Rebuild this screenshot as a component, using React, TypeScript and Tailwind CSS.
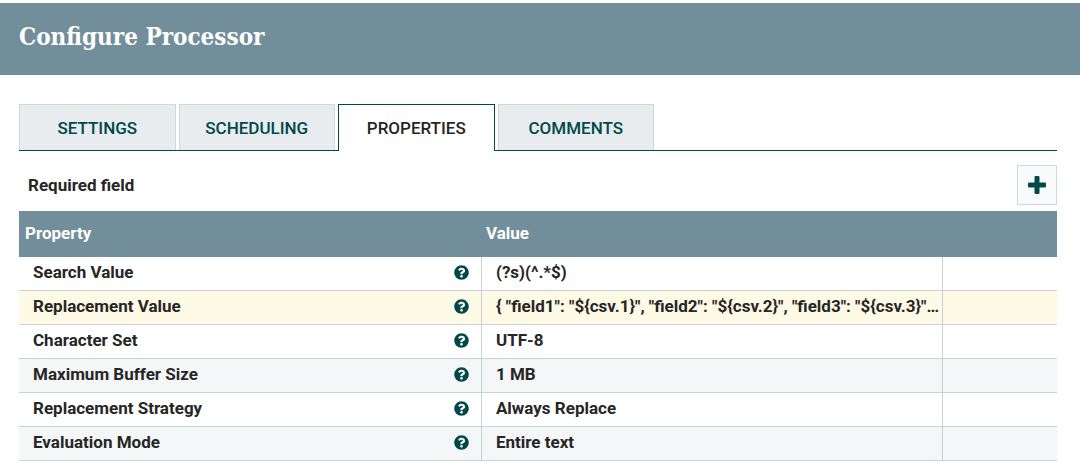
import { useState } from "react";
import { FaQuestionCircle } from "react-icons/fa";

const TABS = ["Settings", "Scheduling", "Properties", "Comments"];

const PROPERTIES = [
  { name: "Search Value", value: "(?s)(^.*$)" },
  {
    name: "Replacement Value",
    value: '{ "field1": "${csv.1}", "field2": "${csv.2}", "field3": "${csv.3}", "field4": "${csv.4}" }',
  },
  { name: "Character Set", value: "UTF-8" },
  { name: "Maximum Buffer Size", value: "1 MB" },
  { name: "Replacement Strategy", value: "Always Replace" },
  { name: "Evaluation Mode", value: "Entire text" },
];

function rowColor(index: number, selected: number) {
  if (index === selected) return "bg-[#fffae6]";
  return index % 2 === 0 ? "bg-white" : "bg-[#f4f6f7]";
}

function PlusIcon() {
  return (
    <svg viewBox="0 0 18 18" className="size-[18px]" fill="currentColor" aria-hidden="true">
      <path d="M7.8 0h2.4a1.3 1.3 0 0 1 1.3 1.3v5.2h5.2A1.3 1.3 0 0 1 18 7.8v2.4a1.3 1.3 0 0 1-1.3 1.3h-5.2v5.2a1.3 1.3 0 0 1-1.3 1.3H7.8a1.3 1.3 0 0 1-1.3-1.3v-5.2H1.3A1.3 1.3 0 0 1 0 10.2V7.8a1.3 1.3 0 0 1 1.3-1.3h5.2V1.3A1.3 1.3 0 0 1 7.8 0z" />
    </svg>
  );
}

export default function App() {
  const [activeTab, setActiveTab] = useState("Properties");
  const [selectedRow, setSelectedRow] = useState(1);

  return (
    <div className="bg-white pt-[3px] pb-2 font-['Roboto',sans-serif] text-[17px] leading-6 text-[#262626]">
      <header className="bg-[#728e9b] px-[19px] pt-[18px] pb-[22px]">
        <h1 className="font-['Roboto_Slab','DejaVu_Serif_Condensed','DejaVu_Serif',serif] text-[24px] leading-8 font-bold text-white">
          Configure Processor
        </h1>
      </header>

      <main className="pt-[29px] pr-[23px] pl-[19px]">
        <div role="tablist" className="border-b border-[#004849]">
          <div className="flex w-[635px] gap-[3px]">
            {TABS.map((tab) => (
              <button
                key={tab}
                type="button"
                role="tab"
                aria-selected={tab === activeTab}
                onClick={() => setActiveTab(tab)}
                className={
                  tab === activeTab
                    ? "-mb-px h-[47px] flex-1 border border-b-0 border-[#004849] bg-white font-medium uppercase"
                    : "h-[46px] flex-1 border border-b-0 border-[#ccdadb] bg-[#e8ecef] font-medium text-[#004849] uppercase"
                }
              >
                {tab}
              </button>
            ))}
          </div>
        </div>

        <div className="flex items-center justify-between pt-[14px] pb-[6px] pl-[9px]">
          <span className="font-bold">Required field</span>
          <button
            type="button"
            aria-label="Add property"
            className="flex size-10 items-center justify-center border border-[#ccdadb] bg-[#f9fafb] text-[#004849]"
          >
            <PlusIcon />
          </button>
        </div>

        <table className="w-full table-fixed border-separate border-spacing-0 text-left font-bold">
          <thead>
            <tr className="h-[46px] bg-[#728e9b] text-white">
              <th scope="col" className="w-[44.6%] px-1.5 pb-0.5">Property</th>
              <th scope="col" className="w-[44.4%] px-1 pb-0.5">Value</th>
              <td></td>
            </tr>
          </thead>
          <tbody>
            {PROPERTIES.map((property, index) => (
              <tr
                key={property.name}
                onClick={() => setSelectedRow(index)}
                className={`h-[34px] ${rowColor(index, selectedRow)}`}
              >
                <th scope="row" className="border-r border-b border-[#c7d2d7] pr-3 pb-[3px] pl-3.5">
                  <div className="flex items-center justify-between">
                    {property.name}
                    <FaQuestionCircle className="size-[15px] text-[#004849]" />
                  </div>
                </th>
                <td className="truncate border-r border-b border-[#c7d2d7] pb-[3px] pl-3.5">{property.value}</td>
                <td className="border-b border-[#c7d2d7]"></td>
              </tr>
            ))}
          </tbody>
        </table>
      </main>
    </div>
  );
}
